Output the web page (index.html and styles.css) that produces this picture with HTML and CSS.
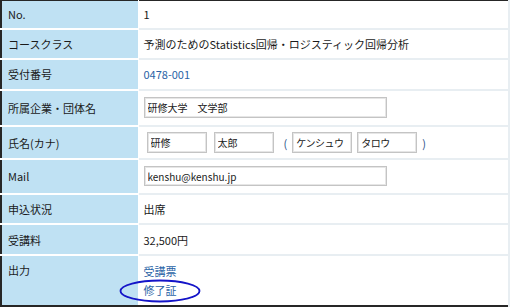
FILE: index.html
```html
<!DOCTYPE html>
<html>
<head>
<meta charset="utf-8">
<link rel="stylesheet" href="styles.css">
</head>
<body>
<table class="detail">
    <tr class="r1">
        <th>No.</th>
        <td>1</td>
    </tr>
    <tr class="r2">
        <th>コースクラス</th>
        <td>予測のためのStatistics回帰・ロジスティック回帰分析</td>
    </tr>
    <tr class="r3">
        <th>受付番号</th>
        <td><a class="link">0478-001</a></td>
    </tr>
    <tr class="r4">
        <th>所属企業・団体名</th>
        <td><input class="txt wide" value="研修大学　文学部"></td>
    </tr>
    <tr class="r5">
        <th>氏名(カナ)</th>
        <td>
            <div class="names">
                <input class="txt name first" value="研修">
                <input class="txt name" value="太郎">
                <span class="paren open">(</span>
                <input class="txt name kana" value="ケンシュウ">
                <input class="txt name kana" value="タロウ">
                <span class="paren close">)</span>
            </div>
        </td>
    </tr>
    <tr class="r6">
        <th>Mail</th>
        <td><input class="txt wide mail" value="kenshu@kenshu.jp"></td>
    </tr>
    <tr class="r7">
        <th>申込状況</th>
        <td>出席</td>
    </tr>
    <tr class="r8">
        <th>受講料</th>
        <td>32,500円</td>
    </tr>
    <tr class="r9">
        <th>出力</th>
        <td>
            <div class="outputs">
                <a class="link">受講票</a>
                <span class="marked">
                    <a class="link">修了証</a>
                    <svg class="circle" width="82" height="24" viewBox="0 0 82 24">
                        <ellipse cx="41" cy="12" rx="39.5" ry="10.5" fill="none" stroke="#1414c8" stroke-width="1.8"/>
                    </svg>
                </span>
            </div>
        </td>
    </tr>
</table>
</body>
</html>
```

FILE: styles.css
```css
body {
    margin:0;
    font-family:"Noto Sans CJK JP", "Liberation Sans", sans-serif;
    font-size:11px;
    line-height:16px;
    color:#1a1a1a;
}

.detail {
    width:510px;
    height:307px;
    box-sizing:border-box;
    border-collapse:collapse;
    border:2px solid #262626;
    border-top-width:1px;
    font-size:11px;
}

.detail th {
    width:137px;
    padding:0 0 0 6px;
    text-align:left;
    font-weight:normal;
    background:#bfe1f3;
    border-bottom:2px solid #fff;
    border-right:1px solid #fff;
    vertical-align:middle;
    box-sizing:border-box;
}

.detail td {
    padding:0 0 0 5px;
    background:#fff;
    border-bottom:2px solid #e8eef2;
    border-right:2px solid #e8eef2;
    vertical-align:middle;
}

.detail tr.r9 th, .detail tr.r9 td {
    border-bottom:0;
    vertical-align:top;
    padding-top:6px;
}

.r1 { height:28px; }
.r2 { height:30px; }
.r3 { height:30px; }
.r4 { height:36px; }
.r5 { height:33px; }
.r6 { height:34px; }
.r7 { height:30px; }
.r8 { height:31px; }
.r9 { height:50px; }

.link {
    color:#2a63a6;
    text-decoration:none;
}

input.txt {
    font:10px/14px "Noto Sans CJK JP", "Liberation Sans", sans-serif;
    color:#1a1a1a;
    height:21px;
    padding:0 3px;
    box-sizing:border-box;
    border:1px solid #c4c4c4;
    box-shadow:inset 0 0 0 1px #e6e6e6;
    outline:0;
    margin:0;
}

input.wide {
    width:243px;
    display:block;
}

input.mail {
    height:20px;
}

.names {
    display:flex;
    align-items:center;
}

input.name {
    width:60px;
    margin-right:7px;
}

input.name.first {
    margin-left:3px;
}

input.name.kana {
    margin-right:5px;
    letter-spacing:-0.5px;
}

.paren.open {
    margin-left:3px;
    margin-right:5px;
    color:#2a4f86;
}

.paren.close {
    color:#2a4f86;
}

.outputs {
    display:flex;
    flex-direction:column;
    align-items:flex-start;
    line-height:19px;
}

.marked {
    position:relative;
}

.circle {
    position:absolute;
    left:-25px;
    top:-2px;
}
```
